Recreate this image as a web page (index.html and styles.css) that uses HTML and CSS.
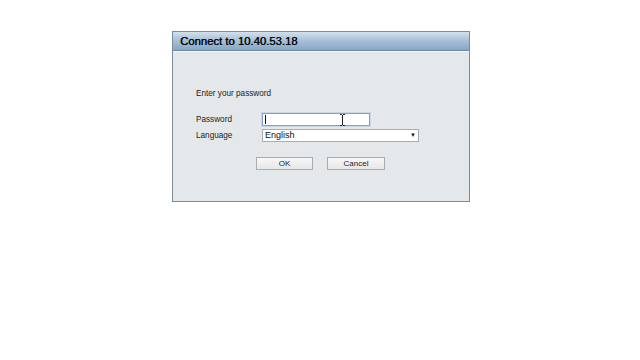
FILE: index.html
```html
<!DOCTYPE html>
<html>
<head>
<meta charset="utf-8">
<link rel="stylesheet" href="styles.css">
</head>
<body>
<div class="page">
  <div class="dialog">
    <div class="title">Connect to 10.40.53.18</div>
    <div class="body">
      <div class="prompt">Enter your password</div>
      <div class="row">
        <span class="label">Password</span>
        <span class="pwd"><span class="caret"></span>
          <svg class="ibeam" width="7" height="12" viewBox="0 0 7 12"><path d="M1 0.5h2M4 0.5h2M3.5 1v10M1 11.5h2M4 11.5h2" stroke="#222" stroke-width="1" fill="none"/></svg>
        </span>
      </div>
      <div class="row">
        <span class="label">Language</span>
        <span class="select">English<span class="arrow">&#9660;</span></span>
      </div>
      <div class="buttons">
        <span class="btn ok">OK</span>
        <span class="btn cancel">Cancel</span>
      </div>
    </div>
  </div>
</div>
</body>
</html>
```
FILE: styles.css
```css
html, body { margin: 0; padding: 0; background: #ffffff; }
body { width: 640px; height: 360px; overflow: hidden; font-family: "Liberation Sans", Arial, sans-serif; }
.page { padding: 31px 0 0 172px; }
.dialog {
  width: 296px;
  height: 169px;
  border: 1px solid #7d8c98;
  background: #e4e8eb;
  box-sizing: content-box;
}
.title {
  height: 18px;
  background: linear-gradient(#d3e0ec, #a9c1d9 45%, #86a6c6);
  border-bottom: 1px solid #6f8aa5;
  color: #0a0a0a;
  font-size: 11.3px;
  line-height: 18px;
  padding-left: 7px;
  text-shadow: 0.4px 0 0 #0a0a0a;
}
.body { border-top: 1px solid #f4f6f8; padding: 36px 0 0 23px; font-size: 8.2px; color: #222; }
.prompt { height: 12px; line-height: 12px; margin-bottom: 13px; }
.row { display: flex; align-items: center; height: 13px; margin-bottom: 3px; }
.label { width: 66px; }
.pwd {
  position: relative;
  width: 106px; height: 11px;
  background: #fff;
  border: 1px solid #7fa3cc;
  box-shadow: 0 0 0 1px #c6d7ea;
}
.caret { position: absolute; left: 2px; top: 1px; width: 1px; height: 9px; background: #111; }
.ibeam { position: absolute; left: 76px; top: 0px; }
.select {
  position: relative;
  width: 153px; height: 11px; line-height: 11px;
  background: #fff;
  border: 1px solid #a8adb2;
  padding-left: 2px;
  font-size: 9px;
  color: #111;
}
.arrow { position: absolute; right: 2px; top: 0; font-size: 6px; }
.buttons { display: flex; gap: 14px; margin: 15px 0 0 60px; }
.btn {
  display: flex; align-items: center; justify-content: center;
  height: 11px;
  border: 1px solid #a9adb1;
  background: linear-gradient(#f8f8f8, #e6e6e6);
  color: #222;
  font-size: 8px;
}
.ok { width: 55px; }
.cancel { width: 56px; }
```
